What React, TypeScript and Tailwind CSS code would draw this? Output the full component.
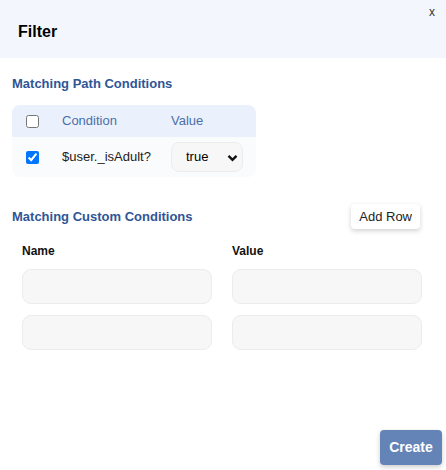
import React from "react";

function Chevron() {
  return (
    <svg width="11" height="8" viewBox="0 0 11 8" className="pointer-events-none absolute right-[5px] top-[12px]">
      <path d="M1.5 1.8 L5.5 5.8 L9.5 1.8" fill="none" stroke="#111" strokeWidth="2.4" />
    </svg>
  );
}

export default function App() {
  const rows = [0, 1];

  return (
    <div className="relative flex h-[470px] w-[446px] flex-col bg-white font-['Liberation_Sans',Arial,sans-serif] text-[#222]">
      <div className="flex h-[58px] items-center bg-[#f3f7fd] px-[18px] pt-[5px]">
        <h1 className="text-[16px] font-bold text-black">Filter</h1>
        <button className="absolute right-[11px] top-[5px] text-[12px] leading-[14px] text-[#333]">x</button>
      </div>

      <div className="px-[12px]">
        <h2 className="mt-[18px] text-[13px] font-bold leading-[16px] text-[#2f5596]">Matching Path Conditions</h2>

        <div className="mt-[13px] w-[244px] overflow-hidden rounded-[8px] text-[13px]">
          <div className="flex h-[32px] items-center bg-[#eaf1fc] text-[#4a6fa8]">
            <div className="flex w-[50px] pl-[14px]">
              <input type="checkbox" className="m-0 h-[13px] w-[13px]" />
            </div>
            <div className="w-[109px]">Condition</div>
            <div>Value</div>
          </div>
          <div className="flex h-[40px] items-center bg-[#fafbfc] text-[#222]">
            <div className="flex w-[50px] pl-[14px]">
              <input type="checkbox" defaultChecked className="m-0 h-[13px] w-[13px]" />
            </div>
            <div className="w-[109px]">$user._isAdult?</div>
            <div className="relative">
              <select className="h-[30px] w-[72px] appearance-none rounded-[8px] border border-[#ececec] bg-[#f7f7f7] pl-[14px] text-[13px] text-black outline-none">
                <option>true</option>
                <option>false</option>
              </select>
              <Chevron />
            </div>
          </div>
        </div>

        <div className="mt-[27px] flex items-center justify-between pr-[14px]">
          <h2 className="text-[13px] font-bold leading-[16px] text-[#2f5596]">Matching Custom Conditions</h2>
          <button className="h-[25px] rounded-[4px] bg-white px-[8px] text-[13px] text-[#222] shadow-[0_2px_5px_rgba(0,0,0,0.18)]">
            Add Row
          </button>
        </div>

        <div className="mt-[15px] grid grid-cols-[190px_190px] gap-x-[20px] px-[10px]">
          <div className="text-[12px] font-bold leading-[14px] text-[#111]">Name</div>
          <div className="text-[12px] font-bold leading-[14px] text-[#111]">Value</div>
        </div>
        <div className="mt-[11px] grid grid-cols-[190px_190px] gap-x-[20px] gap-y-[11px] px-[10px]">
          {rows.map((r) => (
            <React.Fragment key={r}>
              <input className="h-[35px] rounded-[9px] border border-[#ececec] bg-[#f7f7f7] px-[10px] text-[13px] outline-none" />
              <input className="h-[35px] rounded-[9px] border border-[#ececec] bg-[#f7f7f7] px-[10px] text-[13px] outline-none" />
            </React.Fragment>
          ))}
        </div>
      </div>

      <div className="mt-auto flex justify-end pb-[5px] pr-[4px]">
        <button className="h-[35px] w-[62px] rounded-[4px] bg-[#6484b7] text-[14px] font-bold text-white shadow-[0_2px_5px_rgba(0,0,0,0.2)]">
          Create
        </button>
      </div>
    </div>
  );
}
